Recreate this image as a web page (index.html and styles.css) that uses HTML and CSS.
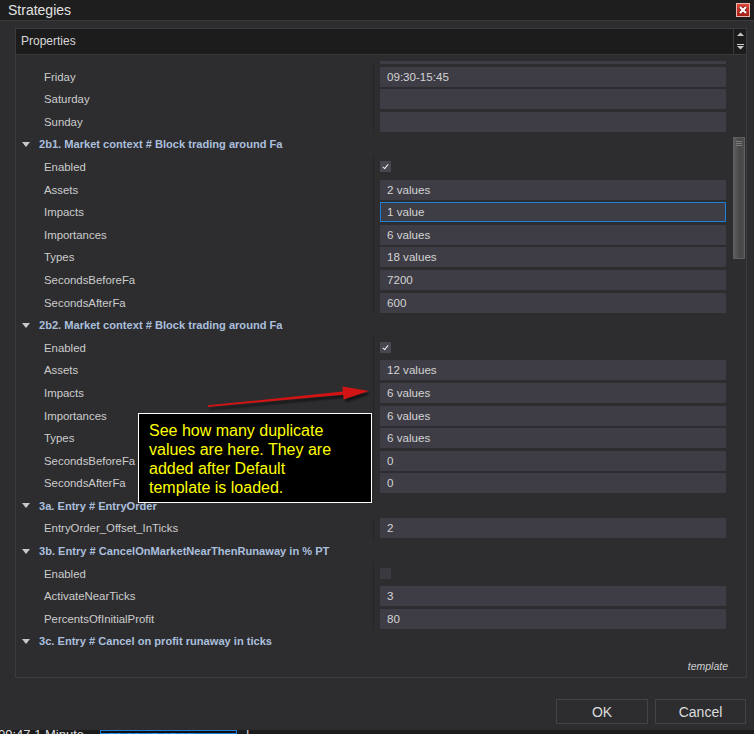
FILE: index.html
```html
<!DOCTYPE html>
<html lang="en">
<head>
    <meta charset="UTF-8">
    <meta name="viewport" content="width=device-width, initial-scale=1.0">
    <title>Strategies</title>
    <link rel="stylesheet" href="styles.css">
</head>
<body>
    <div class="window">
        <div class="titlebar">
            <span class="title">Strategies</span>
            <svg class="close" width="14" height="14" viewBox="0 0 14 14">
                <defs>
                    <linearGradient id="red" x1="0" y1="0" x2="0" y2="1">
                        <stop offset="0" stop-color="#dc4a3e"/>
                        <stop offset="1" stop-color="#a61b12"/>
                    </linearGradient>
                </defs>
                <rect x="0.5" y="0.5" width="13" height="13" fill="url(#red)" stroke="#e8b6ae"/>
                <path d="M4 4 L10 10 M10 4 L4 10" stroke="#7a1009" stroke-width="3.6"/>
                <path d="M4 4 L10 10 M10 4 L4 10" stroke="#fff" stroke-width="2.2"/>
            </svg>
        </div>

        <div class="panel">
            <div class="props-head">
                <span class="props-title">Properties</span>
                <div class="spin">
                    <svg width="12" height="25" viewBox="0 0 12 25">
                        <path d="M3 7 L6.5 3.5 L10 7 Z" fill="#c8c8c8"/>
                        <path d="M3 15.5 H10" stroke="#c8c8c8" stroke-width="1"/>
                        <path d="M3 17 L10 17 L6.5 20.5 Z" fill="#c8c8c8"/>
                    </svg>
                </div>
            </div>

            <div class="props-body">
                <div class="grid-main">
                    <div class="viewport">
                        <div class="rows">
                            <!-- row scrolled mostly out of view -->
                            <div class="row"><div class="name"></div><div class="value-cell"><div class="field"></div></div></div>
                            <div class="row"><div class="name">Friday</div><div class="value-cell"><div class="field">09:30-15:45</div></div></div>
                            <div class="row"><div class="name">Saturday</div><div class="value-cell"><div class="field"></div></div></div>
                            <div class="row"><div class="name">Sunday</div><div class="value-cell"><div class="field"></div></div></div>

                            <div class="row cat"><span class="caret"></span>2b1. Market context # Block trading around Fa</div>
                            <div class="row"><div class="name">Enabled</div><div class="value-cell"><span class="check on"></span></div></div>
                            <div class="row"><div class="name">Assets</div><div class="value-cell"><div class="field">2 values</div></div></div>
                            <div class="row"><div class="name">Impacts</div><div class="value-cell"><div class="field focus">1 value</div></div></div>
                            <div class="row"><div class="name">Importances</div><div class="value-cell"><div class="field">6 values</div></div></div>
                            <div class="row"><div class="name">Types</div><div class="value-cell"><div class="field">18 values</div></div></div>
                            <div class="row"><div class="name">SecondsBeforeFa</div><div class="value-cell"><div class="field">7200</div></div></div>
                            <div class="row"><div class="name">SecondsAfterFa</div><div class="value-cell"><div class="field">600</div></div></div>

                            <div class="row cat"><span class="caret"></span>2b2. Market context # Block trading around Fa</div>
                            <div class="row"><div class="name">Enabled</div><div class="value-cell"><span class="check on"></span></div></div>
                            <div class="row"><div class="name">Assets</div><div class="value-cell"><div class="field">12 values</div></div></div>
                            <div class="row"><div class="name">Impacts</div><div class="value-cell"><div class="field">6 values</div></div></div>
                            <div class="row"><div class="name">Importances</div><div class="value-cell"><div class="field">6 values</div></div></div>
                            <div class="row"><div class="name">Types</div><div class="value-cell"><div class="field">6 values</div></div></div>
                            <div class="row"><div class="name">SecondsBeforeFa</div><div class="value-cell"><div class="field">0</div></div></div>
                            <div class="row"><div class="name">SecondsAfterFa</div><div class="value-cell"><div class="field">0</div></div></div>

                            <div class="row cat"><span class="caret"></span>3a. Entry # EntryOrder</div>
                            <div class="row"><div class="name">EntryOrder_Offset_InTicks</div><div class="value-cell"><div class="field">2</div></div></div>

                            <div class="row cat"><span class="caret"></span>3b. Entry # CancelOnMarketNearThenRunaway in % PT</div>
                            <div class="row"><div class="name">Enabled</div><div class="value-cell"><span class="check"></span></div></div>
                            <div class="row"><div class="name">ActivateNearTicks</div><div class="value-cell"><div class="field">3</div></div></div>
                            <div class="row"><div class="name">PercentsOfInitialProfit</div><div class="value-cell"><div class="field">80</div></div></div>

                            <div class="row cat"><span class="caret"></span>3c. Entry # Cancel on profit runaway in ticks</div>
                            <div class="row"><div class="name"></div><div class="value-cell"></div></div>
                        </div>
                    </div>
                    <div class="desc">template</div>
                </div>
                <div class="scrollbar">
                    <div class="thumb"><span></span><span></span><span></span></div>
                </div>
            </div>
        </div>

        <div class="actions">
            <button class="btn ok">OK</button>
            <button class="btn cancel">Cancel</button>
        </div>
    </div>

    <div class="taskbar">
        <span class="task">09:47 1 Minute</span>
        <span class="task active">09:30:47 15 Minute</span>
        <span class="task">|</span>
    </div>

    <!-- annotation drawn over the screenshot -->
    <svg class="arrow" width="754" height="734" viewBox="0 0 754 734">
        <defs>
            <filter id="soft" x="-10%" y="-50%" width="120%" height="200%">
                <feGaussianBlur stdDeviation="1.2"/>
            </filter>
        </defs>
        <g fill="rgba(0,0,0,0.55)" filter="url(#soft)" transform="translate(2 3)">
            <polygon points="208,405.3 343,391.6 343,394.8 208,406.9"/>
            <polygon points="369,391 343.6,399.6 342.4,386.6"/>
        </g>
        <g fill="#d31414">
            <polygon points="208,405.3 343,391.6 343,394.8 208,406.9"/>
            <polygon points="369,391 343.6,399.6 342.4,386.6"/>
        </g>
    </svg>
    <div class="note">See how many duplicate<br>values are here. They are<br>added after Default<br>template is loaded.</div>
</body>
</html>
```

FILE: styles.css
```css
body {
    margin: 0;
    width: 754px;
    height: 734px;
    overflow: hidden;
    background-color: #1b1b1b;
    font-family: "Liberation Sans", Arial, sans-serif;
    color: #cfcfcf;
    position: relative;
}
.window {
    height: 730px;
    background: #2d2d30;
    display: flex;
    flex-direction: column;
}
.titlebar {
    height: 20px;
    background: #1e1e1e;
    border-bottom: 1px solid #3a3a3d;
    display: flex;
    align-items: center;
    padding: 0 4px 0 8px;
}
.title {
    font-size: 14px;
    color: #e2e2e2;
}
.close {
    margin-left: auto;
    display: block;
}
.panel {
    margin: 7px 0 0 15px;
    width: 730px;
    border: 1px solid #3c3c3f;
}
.props-head {
    height: 25px;
    background: #1c1c1c;
    border-bottom: 1px solid #3a3a3d;
    display: flex;
}
.props-title {
    flex: 1;
    padding-left: 5px;
    line-height: 25px;
    font-size: 12px;
    color: #d8d8d8;
}
.spin {
    width: 12px;
    border-left: 1px solid #3a3a3d;
}
.spin svg {
    display: block;
}
.props-body {
    display: flex;
    height: 622px;
}
.grid-main {
    width: 717px;
    display: flex;
    flex-direction: column;
}
.viewport {
    margin-top: 6px;
    height: 593px;
    overflow: hidden;
}
.rows {
    margin-top: -18.3px;
}
.row {
    height: 22.6px;
    display: flex;
    align-items: center;
    font-size: 11.4px;
}
.name {
    width: 357px;
    padding-left: 28px;
    box-sizing: border-box;
    color: #cccccc;
}
.value-cell {
    align-self: stretch;
    width: 360px;
    box-sizing: border-box;
    border-left: 1px solid #252528;
    padding: 0 7px 0 6px;
    display: flex;
    align-items: center;
}
.field {
    flex: 1;
    height: 20px;
    box-sizing: border-box;
    background: #3e3d45;
    padding-left: 7px;
    line-height: 20px;
    font-size: 11.6px;
    color: #d4d4d4;
}
.field.focus {
    border: 1px solid #1e7fd8;
    padding-left: 6px;
    line-height: 18px;
}
.check {
    width: 11px;
    height: 11px;
    background: #48474f;
    position: relative;
}
.check.on::after {
    content: "";
    position: absolute;
    left: 4px;
    top: 2px;
    width: 2px;
    height: 5px;
    border: solid #f0f0f0;
    border-width: 0 1.5px 1.5px 0;
    transform: rotate(40deg);
}
.check:not(.on) {
    background: #3b3a41;
}
.row.cat {
    padding-left: 6px;
    font-weight: bold;
    font-size: 11.1px;
    color: #aabfdc;
}
.caret {
    width: 0;
    height: 0;
    border-left: 4px solid transparent;
    border-right: 4px solid transparent;
    border-top: 5px solid #c8c8c8;
    margin-right: 9px;
}
.desc {
    flex: 1;
    text-align: right;
    padding: 6px 5px 0 0;
    font-style: italic;
    font-size: 10.5px;
    line-height: 13px;
    color: #cfcfcf;
}
.scrollbar {
    width: 13px;
}
.thumb {
    margin-top: 82px;
    width: 12px;
    height: 122px;
    box-sizing: border-box;
    border: 1px solid #606060;
    background: linear-gradient(90deg, #5c5c5c, #474747 60%, #4e4e4e);
    padding: 3px 2px 0 2px;
}
.thumb span {
    display: block;
    height: 1px;
    background: #7a7a7a;
    margin-bottom: 1px;
}
.actions {
    display: flex;
    justify-content: flex-end;
    gap: 7px;
    margin-top: 21px;
    padding-right: 8px;
}
.btn {
    height: 25px;
    background: #2d2d30;
    border: 1px solid #434346;
    color: #dddddd;
    font-family: "Liberation Sans", Arial, sans-serif;
    font-size: 14px;
    padding: 0;
}
.ok {
    width: 92px;
}
.cancel {
    width: 91px;
}
.taskbar {
    height: 4px;
    overflow: hidden;
    background: #1c1c1c;
    display: flex;
    font-size: 13px;
    line-height: 14px;
}
.task {
    margin-top: -2px;
    color: #dddddd;
    width: 100px;
    margin-left: -2px;
}
.task.active {
    margin-top: 0;
    margin-left: 2px;
    width: 128px;
    padding-left: 7px;
    border: 1px solid #1e7fd8;
    background: #0f0f0f;
    color: #3794ff;
}
.task.active + .task {
    margin-left: 9px;
    width: 10px;
}
.arrow {
    position: absolute;
    left: 0;
    top: 0;
    pointer-events: none;
}
.note {
    position: absolute;
    left: 138px;
    top: 413px;
    width: 234px;
    height: 90px;
    box-sizing: border-box;
    border: 1px solid #ffffff;
    background: #000000;
    color: #ffff00;
    font-size: 16px;
    line-height: 19px;
    padding: 7px 10px;
}
```
